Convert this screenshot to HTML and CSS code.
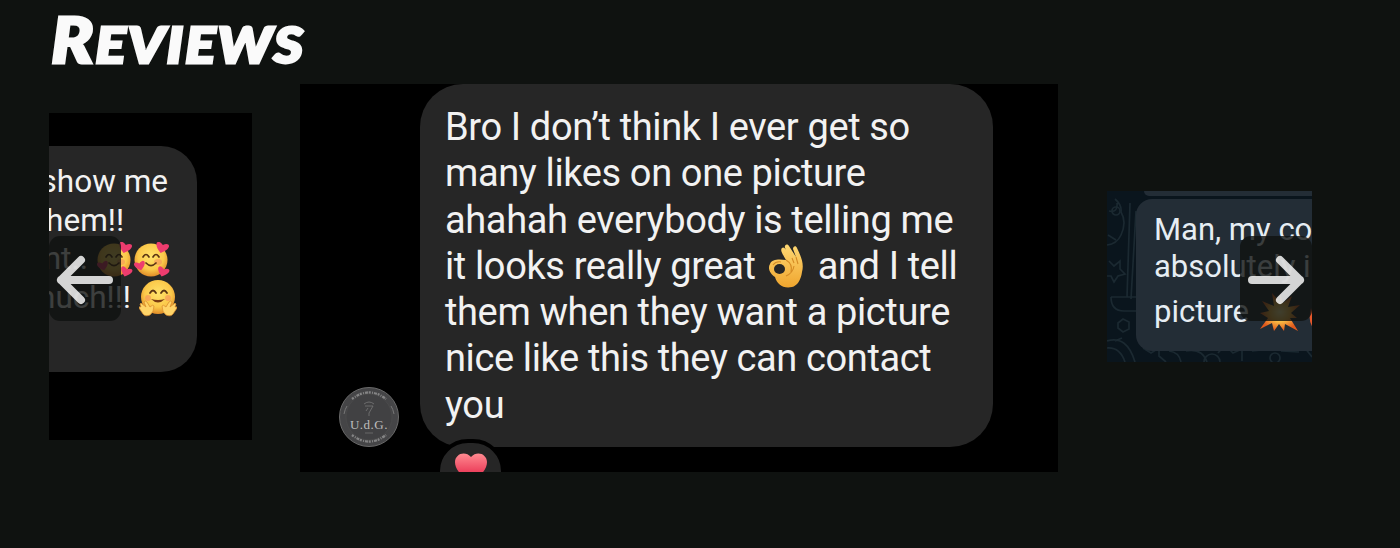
FILE: index.html
```html
<!DOCTYPE html>
<html lang="en">

<head>
	<meta charset="UTF-8">
	<meta name="viewport" content="width=device-width, initial-scale=1.0">
	<title>Reviews</title>
	<link rel="stylesheet" href="styles.css">
</head>

<body>
	<svg class="defs" width="0" height="0" aria-hidden="true">
		<defs>
			<radialGradient id="face" cx=".5" cy=".4" r=".6">
				<stop offset="0" stop-color="#ffe36b" />
				<stop offset=".65" stop-color="#fbc94a" />
				<stop offset="1" stop-color="#e08c28" />
			</radialGradient>
			<linearGradient id="skin" x1="0" y1="0" x2="0" y2="1">
				<stop offset="0" stop-color="#ffd873" />
				<stop offset="1" stop-color="#efa52e" />
			</linearGradient>
			<radialGradient id="blast">
				<stop offset="0" stop-color="#fff0a0" />
				<stop offset=".5" stop-color="#f9bd45" />
				<stop offset="1" stop-color="#e2591c" />
			</radialGradient>
			<linearGradient id="love" x1="0" y1="0" x2="0" y2="1">
				<stop offset="0" stop-color="#ff8b91" />
				<stop offset=".6" stop-color="#ee4660" />
				<stop offset="1" stop-color="#d82c4d" />
			</linearGradient>
			<path id="heart" d="M0 5C-10-2-6-8 0-3C6-8 10-2 0 5Z" fill="#ed3c6e" />
			<symbol id="hearts-face" viewBox="0 0 36 36">
				<circle cx="17" cy="18" r="16.5" fill="url(#face)" />
				<ellipse cx="24" cy="20" rx="4" ry="3" fill="#f4885c" opacity=".5" />
				<path d="M9 15q3-5 6 0M19 15q3-5 6 0M12 21q5 5 10 0" fill="none" stroke="#5b3513" stroke-width="1.7" stroke-linecap="round" />
				<use href="#heart" transform="translate(28 6) rotate(15) scale(1.05)" />
				<use href="#heart" transform="translate(6 24) rotate(-15) scale(.9)" />
				<use href="#heart" transform="translate(29 30) rotate(18) scale(.95)" />
			</symbol>
		</defs>
	</svg>

	<section class="reviews">
		<h2 class="title"><span class="first">R</span>eviews</h2>

		<div class="slider">
			<div class="slide slide-prev">
				<div class="bubble">
					<p class="line line-show">show me</p>
					<p class="line line-them">hem!!</p>
					<p class="line line-nt"><span class="dots">nt..</span><svg class="emoji"><use href="#hearts-face" /></svg><svg class="emoji"><use href="#hearts-face" /></svg></p>
					<p class="line line-much">much!!!<svg class="emoji emoji-hug" viewBox="0 0 38 38">
							<circle cx="19" cy="18" r="17" fill="url(#face)" />
							<path d="M11 14q3-5 6 0M22 14q3-5 6 0" fill="none" stroke="#5b3513" stroke-width="1.8" stroke-linecap="round" />
							<path d="M12 20q7 7 14 0q-7 2-14 0Z" fill="#7a3b12" />
							<circle cx="9" cy="19" r="3" fill="#f4885c" opacity=".55" />
							<circle cx="29" cy="19" r="3" fill="#f4885c" opacity=".55" />
							<g fill="#ffd468" stroke="#d98a2b" stroke-width=".7">
								<path d="M2 24l5 4-2-5q1-2 3 0l3 5q3-3 4-1q0 6-4 9q-5 2-7-1l-4-6q0-2 2-1l-1-3Z" />
								<path d="M36 24l-5 4 2-5q-1-2-3 0l-3 5q-3-3-4-1q0 6 4 9q5 2 7-1l4-6q0-2-2-1l1-3Z" />
							</g>
						</svg></p>
				</div>
			</div>

			<div class="slide slide-current">
				<div class="avatar">
					<svg viewBox="0 0 60 60">
						<circle cx="30" cy="30" r="29.5" fill="#454547" stroke="#6a6a6a" />
						<path d="M13 12q17-13 34 0M13 48q17 13 34 0" fill="none" stroke="#a0a0a0" stroke-width="2.4" stroke-dasharray="2 1.300 1 1 3 .800" opacity=".7" />
						<path d="M5 27q1-5 3-8M55 27q-1-5-3-8" fill="none" stroke="#777" stroke-width="1" />
						<circle cx="30" cy="30" r="23" fill="#414143" stroke="#505050" stroke-width=".5" />
						<path d="M25 17q5-4 10 0M26 19h8l-4 7v3M29 21l-2 3" fill="none" stroke="#777" stroke-width=".8" />
						<path d="M26 46h8" stroke="#696969" stroke-width="1" />
					</svg>
					<span>U.d.G.</span>
				</div>
				<div class="bubble">
					<p class="line">Bro I don’t think I ever get so</p>
					<p class="line">many likes on one picture</p>
					<p class="line">ahahah everybody is telling me</p>
					<p class="line">it looks really great <svg class="emoji-ok" viewBox="0 0 36 44">
							<path d="M18 16C14 9 12 6 14 4c2-2 4 1 9 10L17 4c-1-3 2-5 4-2l7 11-3-8c0-3 3-4 4-1 5 10 7 17 5 24-1 8-5 14-10 15-9 2-15-3-17-10C3 30-1 25 2 20c2-5 9-5 16-4Z" fill="url(#skin)" />
							<ellipse cx="11.500" cy="25" rx="5.500" ry="5" fill="#262626" />
							<path d="M18 16q7 4 5 12M18 32q7-3 8-10M24 14l2 5M28 13l2 7M5 21q3-4 8-3" fill="none" stroke="#d58b25" stroke-width="1.1" />
						</svg> and I tell</p>
					<p class="line">them when they want a picture</p>
					<p class="line">nice like this they can contact</p>
					<p class="line">you</p>
				</div>
				<div class="reaction">
					<svg viewBox="0 0 32 30"><path d="M16 29C5 22 0 16 0 9C0 1 10-3 16 4C22-3 32 1 32 9C32 16 27 22 16 29Z" fill="url(#love)" /></svg>
				</div>
			</div>

			<div class="slide slide-next">
				<svg class="doodles" viewBox="0 0 205 171" fill="none" stroke="#1b2931" stroke-width="1.7">
					<path d="M2 20q9 2 8-8M8 8q7 6 6 13q6 10 0 23q-4 9-14 10M1 44l8 5M23 12l-3 94M29 20l-5 88M4 106h25M4 106q0 14 13 14h15M2 70l5 5 6-5 0 8 5 5-7 2-4 6-3-6-5 0M11 132l5-4 6 3 0 7-6 3-5-4Z" />
					<path d="M0 150q20-6 28 21M0 157q13-1 18 14M8 150l7-3M36 157l8 5 8-5 0 8 7 6M62 160q10 1 12 11M79 160q16-3 21 11M111 162l7-8 8 8 9-4 0 12M145 160l20-2M174 160l18 1M198 157l7 9" />
					<circle cx="9" cy="20" r="4" />
					<circle cx="168" cy="167" r="5" />
					<circle cx="105" cy="171" r="8" />
				</svg>
				<div class="bubble bubble-above"></div>
				<div class="bubble">
					<p class="line">Man, my co</p>
					<p class="line">absolutely i</p>
					<p class="line line-last">picture<svg class="emoji-blast" viewBox="0 0 80 40">
							<path d="M20 0l3 10 9-7-4 11 12-2-9 8 6 5-7 0 8 13-13-7-1 7-5-7-5 7-2-8-12 6 8-11-8-5 9-2-7-10 12 5-2-13 8 9Z" fill="url(#blast)" />
							<path d="M51 15q-4 16 4 21h10V8q-7 8-8 13q-5-1-6-6Z" fill="#e6582b" />
						</svg></p>
				</div>
			</div>

			<button class="arrow arrow-prev" aria-label="Previous">
				<svg viewBox="0 0 72 85"><path d="M60 44H12M32 24L12 44L32 64" /></svg>
			</button>
			<button class="arrow arrow-next" aria-label="Next">
				<svg viewBox="0 0 72 85"><path d="M12 44H60M40 24L60 44L40 64" /></svg>
			</button>
		</div>
	</section>
</body>

</html>
```

FILE: styles.css
```css
* {
	margin: 0;
	padding: 0;
	box-sizing: border-box;
}

body {
	background-color: #0f1210;
	font-family: Roboto, "Liberation Sans", sans-serif;
	overflow: hidden;
}

.defs {
	display: block;
}

.reviews {
	width: 1263px;
	margin-left: 49px;
}

.title {
	width: 270px;
	height: 84px;
	padding-left: 2px;
	color: #fafafa;
	font-family: Lato, "Open Sans", sans-serif;
	font-size: 50px;
	font-weight: 900;
	font-style: italic;
	line-height: 88px;
	letter-spacing: 2px;
	text-transform: uppercase;
	white-space: nowrap;
	-webkit-text-stroke: 3px #fafafa;
	stroke-linejoin: round;
	transform: scaleX(1.12);
	transform-origin: left;
}

.first {
	font-size: 62px;
	line-height: 1;
}

.slider {
	position: relative;
	display: flex;
	align-items: center;
	gap: 48px;
	height: 388px;
	overflow: hidden;
}

.slide {
	display: flex;
	flex-shrink: 0;
	overflow: hidden;
	background-color: #000;
}

.bubble {
	background-color: #262626;
	color: #f2f2f2;
}

.line {
	white-space: nowrap;
}

/* previous */
.slide-prev {
	width: 203px;
	height: 327px;
	margin-bottom: 3px;
	padding-top: 33px;
}

.slide-prev .bubble {
	width: 148px;
	height: 226px;
	padding-top: 17px;
	border-radius: 0 36px 36px 0;
	font-size: 31.500px;
}

.slide-prev .line {
	display: flex;
	justify-content: flex-end;
	height: 38.600px;
	line-height: 38.600px;
}

.slide-prev .line-show {
	padding-right: 29px;
}

.slide-prev .line-them {
	padding-right: 73px;
}

.slide-prev .line-nt {
	padding-right: 27px;
}

.slide-prev .line-much {
	padding-right: 20px;
}

.dots {
	margin-right: 8px;
}

.emoji {
	flex-shrink: 0;
	width: 36px;
	height: 36px;
	margin-top: 2px;
	margin-left: 1px;
}

.emoji-hug {
	width: 38px;
	height: 38px;
	margin-top: 0;
	margin-left: 8px;
}

/* current */
.slide-current {
	position: relative;
	width: 758px;
	height: 388px;
	padding-left: 39px;
}

.slide-current .bubble {
	width: 573px;
	height: 363px;
	margin-left: 21px;
	padding: 20px 0 0 25px;
	border-radius: 43px;
	font-size: 38px;
	line-height: 46.250px;
	letter-spacing: -.37px;
}

.slide-current .line {
	height: 46.250px;
}

.avatar {
	position: relative;
	align-self: flex-end;
	width: 60px;
	height: 60px;
	margin-bottom: 25px;
}

.avatar svg {
	display: block;
}

.avatar span {
	position: absolute;
	top: 29px;
	left: 0;
	width: 100%;
	color: #bdbdbd;
	font-family: "Liberation Serif", serif;
	font-size: 13px;
	line-height: 18px;
	letter-spacing: .5px;
	text-align: center;
}

.emoji-ok {
	width: 36px;
	height: 44px;
	margin: 0 5px 0 3px;
	vertical-align: -9px;
}

.reaction {
	position: absolute;
	top: 355px;
	left: 136px;
	width: 69px;
	height: 64px;
	padding: 14px 0 0 15px;
	border: 4px solid #000;
	border-radius: 34px;
	background-color: #262626;
}

.reaction svg {
	display: block;
	width: 32px;
	margin-top: -4px;
}

/* next */
.slide-next {
	position: relative;
	flex-direction: column;
	width: 205px;
	height: 171px;
	margin-bottom: 3px;
	margin-left: 1px;
	padding-left: 29px;
	background-color: #0a151d;
}

.slide-next .bubble {
	position: relative;
	height: 152px;
	padding: 12px 0 0 18px;
	border-radius: 16px 0 0 16px;
	background-color: #232d36;
	color: #e6edf3;
	font-size: 31px;
	line-height: 37px;
}

.slide-next .bubble-above {
	height: 5px;
	margin: 0 0 3px 8px;
	padding: 0;
	border-radius: 0 0 0 8px;
}

.doodles {
	position: absolute;
	top: 0;
	left: 0;
	width: 205px;
	height: 171px;
}

.slide-next .line {
	height: 37px;
}

.slide-next .line-last {
	display: flex;
	margin-top: 8px;
}

.emoji-blast {
	flex-shrink: 0;
	width: 80px;
	height: 40px;
	margin-left: 11px;
}

/* arrows */
.arrow {
	position: absolute;
	top: 152px;
	width: 72px;
	height: 85px;
	border: none;
	border-radius: 11px;
	background-color: #0f1210cc;
	cursor: pointer;
}

.arrow-prev {
	left: 0;
}

.arrow-next {
	right: 0;
}

.arrow svg {
	display: block;
}

.arrow path {
	fill: none;
	stroke: #fff;
	stroke-width: 8;
	stroke-linecap: round;
	stroke-linejoin: round;
	opacity: .82;
}

.arrow:hover path {
	opacity: 1;
}
```
